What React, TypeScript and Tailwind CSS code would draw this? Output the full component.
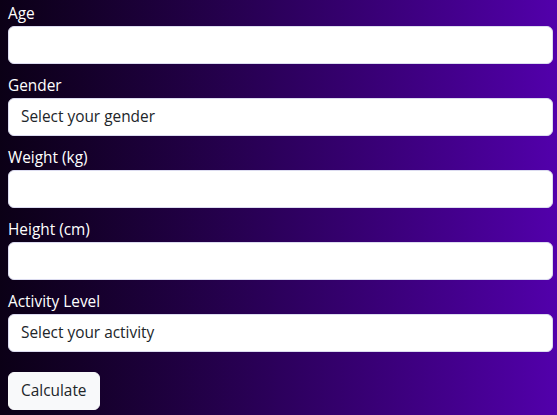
import { useState } from "react";

const fieldClass =
  "block w-full h-[38px] px-3 rounded-md border border-[#dcdcf0] bg-white text-[15.4px] text-[#212529] outline-none appearance-none";

function Field({ label, children }: { label: string; children: React.ReactNode }) {
  return (
    <div className="mb-[10px]">
      <label className="block text-[15.4px] leading-6 text-white">{label}</label>
      {children}
    </div>
  );
}

function App() {
  const [age, setAge] = useState("");
  const [gender, setGender] = useState("");
  const [weight, setWeight] = useState("");
  const [height, setHeight] = useState("");
  const [activity, setActivity] = useState("");

  return (
    <div
      className="min-h-[415px] pl-2 pr-1 pt-[2px] bg-gradient-to-r from-[#0b0016] via-[#2c005c] to-[#5200ab]"
      style={{ fontFamily: '"Segoe UI", "Open Sans", sans-serif' }}
    >
      <Field label="Age">
        <input type="number" className={fieldClass} value={age} onChange={(e) => setAge(e.target.value)} />
      </Field>
      <Field label="Gender">
        <select className={fieldClass} value={gender} onChange={(e) => setGender(e.target.value)}>
          <option value="">Select your gender</option>
          <option value="male">Male</option>
          <option value="female">Female</option>
        </select>
      </Field>
      <Field label="Weight (kg)">
        <input type="number" className={fieldClass} value={weight} onChange={(e) => setWeight(e.target.value)} />
      </Field>
      <Field label="Height (cm)">
        <input type="number" className={fieldClass} value={height} onChange={(e) => setHeight(e.target.value)} />
      </Field>
      <Field label="Activity Level">
        <select className={fieldClass} value={activity} onChange={(e) => setActivity(e.target.value)}>
          <option value="">Select your activity</option>
          <option value="low">Low</option>
          <option value="moderate">Moderate</option>
          <option value="high">High</option>
        </select>
      </Field>
      <button
        type="button"
        className="mt-[10px] h-[38px] px-3 rounded-md border border-[#f8f9fa] bg-[#f8f9fa] text-[15.4px] text-[#212529]"
      >
        Calculate
      </button>
    </div>
  );
}

export default App;
